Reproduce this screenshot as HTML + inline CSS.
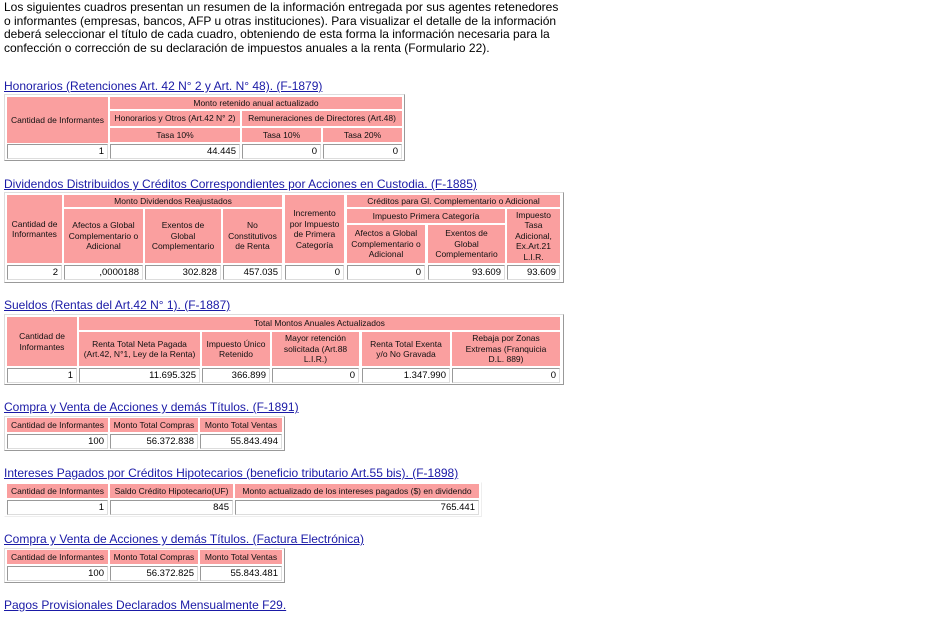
<!DOCTYPE html>
<html><head><meta charset="utf-8"><style>
body{margin:0;width:941px;height:617px;background:#fff;position:relative;overflow:hidden;font-family:"Liberation Sans",sans-serif;color:#000}
.t{position:absolute;left:4px;font-size:12px;line-height:13.5px;white-space:nowrap}
.a{position:absolute;left:4px;font-size:12px;color:#1a1aa6;text-decoration:underline;white-space:nowrap}
.o{position:absolute;border:1px solid #ddd;border-right-color:#999;border-bottom-color:#999;box-sizing:border-box}
.c{position:absolute;display:flex;align-items:center;justify-content:center;text-align:center;background:#fa9f9f;font-size:8.5px;line-height:10.5px;color:#111;overflow:hidden;white-space:nowrap}
.d{position:absolute;display:flex;align-items:center;justify-content:flex-end;background:#fff;border:1px solid #999;border-right-color:#ddd;border-bottom-color:#ddd;box-sizing:border-box;padding-right:3px;font-size:9.5px}
</style></head><body>
<div class="t" style="top:1px">Los siguientes cuadros presentan un resumen de la información entregada por sus agentes retenedores<br>o informantes (empresas, bancos, AFP u otras instituciones). Para visualizar el detalle de la información<br>deberá seleccionar el título de cada cuadro, obteniendo de esta forma la información necesaria para la<br>confección o corrección de su declaración de impuestos anuales a la renta (Formulario 22).</div>

<div class="a" style="top:79px">Honorarios (Retenciones Art. 42 N° 2 y Art. N° 48). (F-1879)</div>
<div class="o" style="left:4px;top:94px;width:401px;height:67px"></div>
<div class="c" style="left:7px;top:97px;width:101px;height:46px">Cantidad de Informantes</div>
<div class="c" style="left:110px;top:97px;width:292px;height:12px">Monto retenido anual actualizado</div>
<div class="c" style="left:110px;top:111px;width:130px;height:15px">Honorarios y Otros (Art.42 N° 2)</div>
<div class="c" style="left:242px;top:111px;width:160px;height:15px">Remuneraciones de Directores (Art.48)</div>
<div class="c" style="left:110px;top:128px;width:130px;height:14px">Tasa 10%</div>
<div class="c" style="left:242px;top:128px;width:79px;height:14px">Tasa 10%</div>
<div class="c" style="left:323px;top:128px;width:79px;height:14px">Tasa 20%</div>
<div class="d" style="left:7px;top:144px;width:101px;height:15px">1</div>
<div class="d" style="left:110px;top:144px;width:130px;height:15px">44.445</div>
<div class="d" style="left:242px;top:144px;width:79px;height:15px">0</div>
<div class="d" style="left:323px;top:144px;width:79px;height:15px">0</div>

<div class="a" style="top:177px">Dividendos Distribuidos y Créditos Correspondientes por Acciones en Custodia. (F-1885)</div>
<div class="o" style="left:4px;top:192px;width:560px;height:91px"></div>
<div class="c" style="left:7px;top:195px;width:55px;height:68px">Cantidad de<br>Informantes</div>
<div class="c" style="left:64px;top:195px;width:218px;height:12px">Monto Dividendos Reajustados</div>
<div class="c" style="left:64px;top:209px;width:79px;height:54px">Afectos a Global<br>Complementario o<br>Adicional</div>
<div class="c" style="left:145px;top:209px;width:76px;height:54px">Exentos de<br>Global<br>Complementario</div>
<div class="c" style="left:223px;top:209px;width:59px;height:54px">No<br>Constitutivos<br>de Renta</div>
<div class="c" style="left:285px;top:195px;width:59px;height:68px">Incremento<br>por Impuesto<br>de Primera<br>Categoría</div>
<div class="c" style="left:347px;top:195px;width:213px;height:12px">Créditos para Gl. Complementario o Adicional</div>
<div class="c" style="left:347px;top:209px;width:158px;height:14px">Impuesto Primera Categoría</div>
<div class="c" style="left:347px;top:225px;width:78px;height:38px">Afectos a Global<br>Complementario o<br>Adicional</div>
<div class="c" style="left:428px;top:225px;width:77px;height:38px">Exentos de<br>Global<br>Complementario</div>
<div class="c" style="left:507px;top:209px;width:53px;height:54px">Impuesto<br>Tasa<br>Adicional,<br>Ex.Art.21<br>L.I.R.</div>
<div class="d" style="left:7px;top:265px;width:55px;height:15px">2</div>
<div class="d" style="left:64px;top:265px;width:79px;height:15px">,0000188</div>
<div class="d" style="left:145px;top:265px;width:76px;height:15px">302.828</div>
<div class="d" style="left:223px;top:265px;width:59px;height:15px">457.035</div>
<div class="d" style="left:285px;top:265px;width:59px;height:15px">0</div>
<div class="d" style="left:347px;top:265px;width:78px;height:15px">0</div>
<div class="d" style="left:428px;top:265px;width:77px;height:15px">93.609</div>
<div class="d" style="left:507px;top:265px;width:53px;height:15px">93.609</div>

<div class="a" style="top:298px">Sueldos (Rentas del Art.42 N° 1). (F-1887)</div>
<div class="o" style="left:4px;top:314px;width:560px;height:71px"></div>
<div class="c" style="left:7px;top:317px;width:70px;height:49px">Cantidad de<br>Informantes</div>
<div class="c" style="left:79px;top:317px;width:481px;height:13px">Total Montos Anuales Actualizados</div>
<div class="c" style="left:79px;top:332px;width:121px;height:34px">Renta Total Neta Pagada<br>(Art.42, N°1, Ley de la Renta)</div>
<div class="c" style="left:202px;top:332px;width:68px;height:34px">Impuesto Único<br>Retenido</div>
<div class="c" style="left:272px;top:332px;width:87px;height:34px">Mayor retención<br>solicitada (Art.88<br>L.I.R.)</div>
<div class="c" style="left:362px;top:332px;width:88px;height:34px">Renta Total Exenta<br>y/o No Gravada</div>
<div class="c" style="left:452px;top:332px;width:108px;height:34px">Rebaja por Zonas<br>Extremas (Franquicia<br>D.L. 889)</div>
<div class="d" style="left:7px;top:368px;width:70px;height:15px">1</div>
<div class="d" style="left:79px;top:368px;width:121px;height:15px">11.695.325</div>
<div class="d" style="left:202px;top:368px;width:68px;height:15px">366.899</div>
<div class="d" style="left:272px;top:368px;width:87px;height:15px">0</div>
<div class="d" style="left:362px;top:368px;width:88px;height:15px">1.347.990</div>
<div class="d" style="left:452px;top:368px;width:108px;height:15px">0</div>

<div class="a" style="top:400px">Compra y Venta de Acciones y demás Títulos. (F-1891)</div>
<div class="o" style="left:4px;top:416px;width:281px;height:35px"></div>
<div class="c" style="left:7px;top:418px;width:101px;height:14px">Cantidad de Informantes</div>
<div class="c" style="left:110px;top:418px;width:88px;height:14px">Monto Total Compras</div>
<div class="c" style="left:200px;top:418px;width:82px;height:14px">Monto Total Ventas</div>
<div class="d" style="left:7px;top:434px;width:101px;height:15px">100</div>
<div class="d" style="left:110px;top:434px;width:88px;height:15px">56.372.838</div>
<div class="d" style="left:200px;top:434px;width:82px;height:15px">55.843.494</div>

<div class="a" style="top:466px">Intereses Pagados por Créditos Hipotecarios (beneficio tributario Art.55 bis). (F-1898)</div>
<div class="o" style="left:4px;top:482px;width:478px;height:35px;border-color:#fff #eee #eee #fff"></div>
<div class="c" style="left:7px;top:484px;width:101px;height:14px">Cantidad de Informantes</div>
<div class="c" style="left:110px;top:484px;width:123px;height:14px">Saldo Crédito Hipotecario(UF)</div>
<div class="c" style="left:235px;top:484px;width:244px;height:14px">Monto actualizado de los intereses pagados ($) en dividendo</div>
<div class="d" style="left:7px;top:500px;width:101px;height:15px">1</div>
<div class="d" style="left:110px;top:500px;width:123px;height:15px">845</div>
<div class="d" style="left:235px;top:500px;width:244px;height:15px">765.441</div>

<div class="a" style="top:532px">Compra y Venta de Acciones y demás Títulos. (Factura Electrónica)</div>
<div class="o" style="left:4px;top:548px;width:281px;height:35px"></div>
<div class="c" style="left:7px;top:550px;width:101px;height:14px">Cantidad de Informantes</div>
<div class="c" style="left:110px;top:550px;width:88px;height:14px">Monto Total Compras</div>
<div class="c" style="left:200px;top:550px;width:82px;height:14px">Monto Total Ventas</div>
<div class="d" style="left:7px;top:566px;width:101px;height:15px">100</div>
<div class="d" style="left:110px;top:566px;width:88px;height:15px">56.372.825</div>
<div class="d" style="left:200px;top:566px;width:82px;height:15px">55.843.481</div>

<div class="a" style="top:598px">Pagos Provisionales Declarados Mensualmente F29.</div>
</body></html>
